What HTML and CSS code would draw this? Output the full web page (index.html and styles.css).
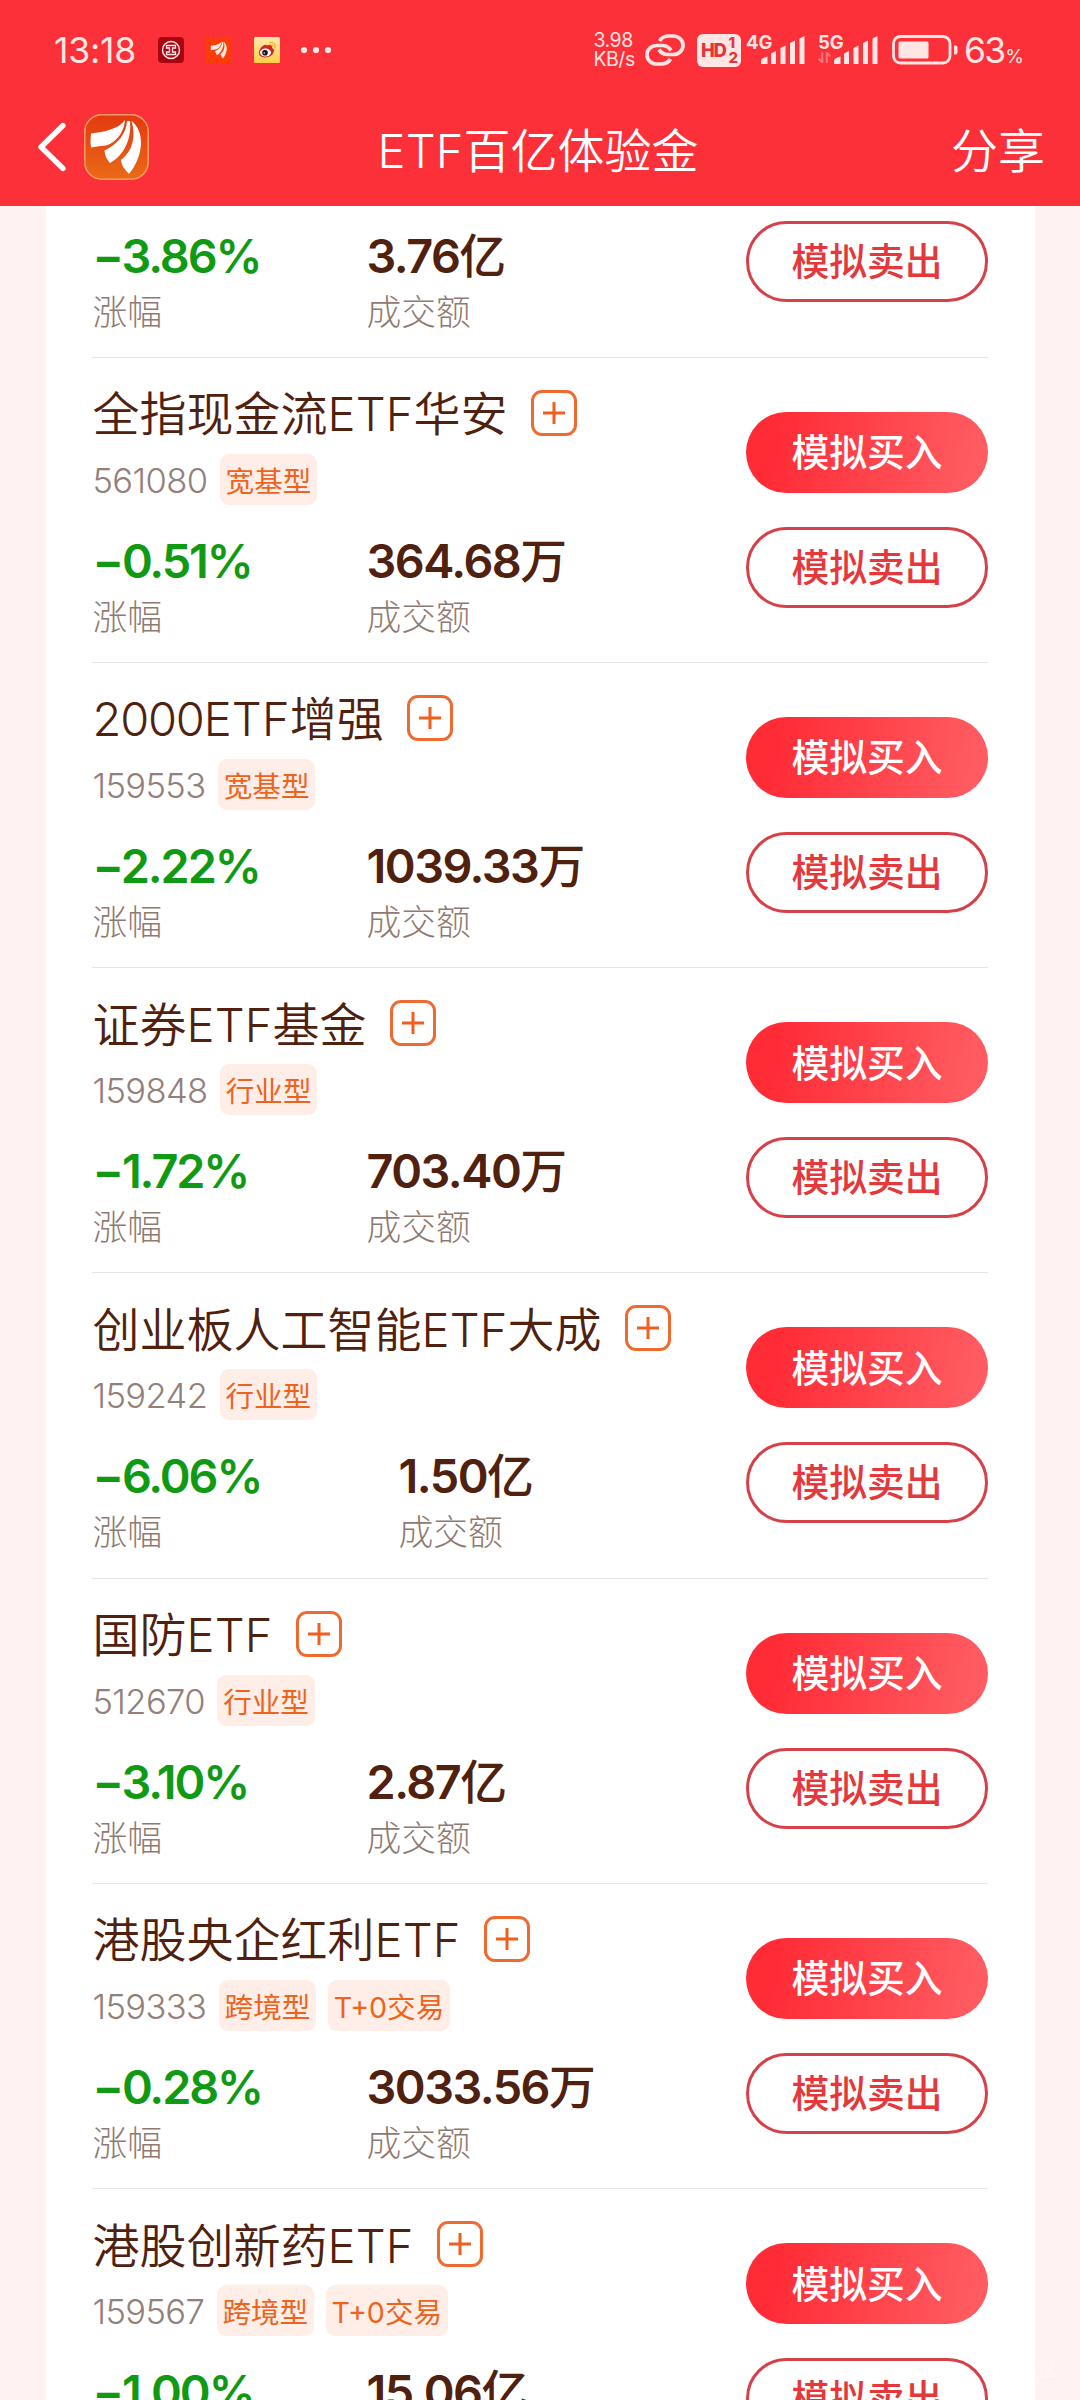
FILE: index.html
```html
<!DOCTYPE html>
<html lang="zh-CN">
<head>
<meta charset="utf-8">
<title>ETF百亿体验金</title>
<link rel="stylesheet" href="styles.css">
</head>
<body>
<svg width="0" height="0" class="defs">
  <symbol id="plus" viewBox="0 0 46 46"><rect x="1.5" y="1.5" width="43" height="43" rx="9.5" fill="none" stroke="#ef6a30" stroke-width="3"/><path d="M12 23H34M23 12V34" stroke="#ef5f1e" stroke-width="3" fill="none"/></symbol>
  <symbol id="petals" viewBox="0 0 65 66"><path d="M41 6C35 15 20 18 7 19.500Q6 27 7 33.500Q15 32 22 31.500C33 28 40 18 41 6Z"/><path d="M43 7C42 20 34 30 20.500 36.500Q21 44 26 49C39 42 48 26 46 7Z"/><path d="M47.500 7C61 17 60 42 45 60Q37 52 37 46C49 37 52 22 47.500 7Z"/></symbol>
  <symbol id="bars" viewBox="0 0 44 28"><path d="M0 28V25Q0 22 6.500 20.500V28ZM10 28V17.500L15 15V28ZM19.500 28V12L24.500 9.500V28ZM29 28V7L34 4.500V28ZM38.500 28V2.500L43.500 0V28Z"/></symbol>
</svg>
<header class="top">
  <div class="status">
    <span class="time">13:18</span>
    <svg class="app" viewBox="0 0 26 26"><rect width="26" height="26" rx="4" fill="#a90310"/><circle cx="13" cy="13" r="8.500" fill="none" stroke="#ffe9e6" stroke-width="1.500"/><path d="M8.500 8.500H17.500V11H14.500V15H17.500V17.500H8.500V15H11.500V11H8.500Z" fill="none" stroke="#ffe9e6" stroke-width="1.300"/></svg>
    <svg class="app" viewBox="0 0 26 26"><rect width="26" height="26" rx="1" fill="#fd3c0a"/><use href="#petals" x="2.500" y="2.500" width="21" height="21" fill="#ffe9dd"/></svg>
    <svg class="app" viewBox="0 0 26 26"><defs><linearGradient id="wb" x2="0" y2="1"><stop stop-color="#ffe9ad"/><stop offset="1" stop-color="#ffcf45"/></linearGradient></defs><rect width="26" height="26" rx="1.500" fill="url(#wb)"/><path d="M5 16C5 11 11 6 13 8.500Q19 6 18 11Q21 12 19.500 15.500C17 22 5 22 5 16Z" fill="#d0262a"/><ellipse cx="11.500" cy="15.500" rx="5.500" ry="4" fill="#fff"/><circle cx="11" cy="15.800" r="2.800" fill="#1c0f10"/><circle cx="10.300" cy="16" r=".8" fill="#fff"/><path d="M15.500 5.500Q21.500 4.500 21 11M16 8Q19 7.500 18.800 10" fill="none" stroke="#fbb13a" stroke-width="1.300"/></svg>
    <svg class="dots" viewBox="0 0 32 8"><circle cx="4" cy="4" r="3.100"/><circle cx="16" cy="4" r="3.100"/><circle cx="28" cy="4" r="3.100"/></svg>
    <div class="sys">
      <span class="speed"><b>3.98</b><b>KB/s</b></span>
      <svg class="link" viewBox="0 0 40 32"><path d="M14.500 7Q17.500 2 24 2H28A10 9.200 0 0 1 28 20.500H22Q16.500 20 14 15.500M25.500 25Q22.500 30 16 30H12A10 9.200 0 0 1 12 11.500H18Q23.500 12 26 16.500" fill="none" stroke-width="3.700"/></svg>
      <span class="hd">HD<i><b>1</b><b>2</b></i></span>
      <span class="net"><b>4G</b><svg class="sig"><use href="#bars"/></svg></span>
      <span class="net net5"><b>5G</b><svg class="updown" viewBox="0 0 14 12"><path d="M4.500 0V11L.5 7.500M9.500 12V1L13.500 4.500" fill="none" stroke-width="2.200"/></svg><svg class="sig"><use href="#bars"/></svg></span>
      <svg class="batt" viewBox="0 0 66 30"><rect x="1.500" y="1.500" width="56.500" height="26.500" rx="7" fill="none" stroke-width="2.800"/><rect x="6.500" y="6.500" width="30" height="17" rx="1.500" stroke="none"/><path d="M62 10.500H63.500Q65.500 10.500 65.500 12.500V17.500Q65.500 19.500 63.500 19.500H62Z" stroke="none"/></svg>
      <span class="pct">63<small>%</small></span>
    </div>
  </div>
  <nav class="bar">
    <svg class="back" viewBox="0 0 28 50"><path d="M25 3.500L3 25L25 46.500" fill="none" stroke="#fff" stroke-width="5.300" stroke-linecap="round" stroke-linejoin="round"/></svg>
    <svg class="logo" viewBox="0 0 65 66"><defs><linearGradient id="lg" x2="0" y2="1"><stop stop-color="#e23a10"/><stop offset="1" stop-color="#ea6a16"/></linearGradient></defs><rect x=".8" y=".8" width="63.400" height="64.400" rx="17" fill="url(#lg)" stroke="#fb9b68" stroke-width="1.500"/><use href="#petals" width="65" height="66" fill="#fff"/></svg>
    <h1><span class="lat">ETF</span>百亿体验金</h1>
    <a class="share">分享</a>
  </nav>
</header>
<main class="page">
  <section class="list">
    <article class="row partial">
      <div class="info">
        <div class="stats"><div class="stat"><em class="down">−3.86%</em><span>涨幅</span></div><div class="stat"><em>3.76<u>亿</u></em><span>成交额</span></div></div>
      </div>
      <div class="actions"><button class="sell">模拟卖出</button></div>
    </article>
    <article class="row">
      <div class="info">
        <div class="name">全指现金流<span class="lat">ETF</span>华安<svg><use href="#plus"/></svg></div>
        <div class="meta"><span class="code">561080</span><span class="tag">宽基型</span></div>
        <div class="stats"><div class="stat"><em class="down">−0.51%</em><span>涨幅</span></div><div class="stat"><em>364.68<u>万</u></em><span>成交额</span></div></div>
      </div>
      <div class="actions"><button class="buy">模拟买入</button><button class="sell">模拟卖出</button></div>
    </article>
    <article class="row">
      <div class="info">
        <div class="name"><span class="num">2000</span><span class="lat">ETF</span>增强<svg><use href="#plus"/></svg></div>
        <div class="meta"><span class="code">159553</span><span class="tag">宽基型</span></div>
        <div class="stats"><div class="stat"><em class="down">−2.22%</em><span>涨幅</span></div><div class="stat"><em>1039.33<u>万</u></em><span>成交额</span></div></div>
      </div>
      <div class="actions"><button class="buy">模拟买入</button><button class="sell">模拟卖出</button></div>
    </article>
    <article class="row">
      <div class="info">
        <div class="name">证券<span class="lat">ETF</span>基金<svg><use href="#plus"/></svg></div>
        <div class="meta"><span class="code">159848</span><span class="tag">行业型</span></div>
        <div class="stats"><div class="stat"><em class="down">−1.72%</em><span>涨幅</span></div><div class="stat"><em>703.40<u>万</u></em><span>成交额</span></div></div>
      </div>
      <div class="actions"><button class="buy">模拟买入</button><button class="sell">模拟卖出</button></div>
    </article>
    <article class="row wide">
      <div class="info">
        <div class="name">创业板人工智能<span class="lat">ETF</span>大成<svg><use href="#plus"/></svg></div>
        <div class="meta"><span class="code">159242</span><span class="tag">行业型</span></div>
        <div class="stats"><div class="stat"><em class="down">−6.06%</em><span>涨幅</span></div><div class="stat"><em>1.50<u>亿</u></em><span>成交额</span></div></div>
      </div>
      <div class="actions"><button class="buy">模拟买入</button><button class="sell">模拟卖出</button></div>
    </article>
    <article class="row">
      <div class="info">
        <div class="name">国防<span class="lat">ETF</span><svg><use href="#plus"/></svg></div>
        <div class="meta"><span class="code">512670</span><span class="tag">行业型</span></div>
        <div class="stats"><div class="stat"><em class="down">−3.10%</em><span>涨幅</span></div><div class="stat"><em>2.87<u>亿</u></em><span>成交额</span></div></div>
      </div>
      <div class="actions"><button class="buy">模拟买入</button><button class="sell">模拟卖出</button></div>
    </article>
    <article class="row">
      <div class="info">
        <div class="name">港股央企红利<span class="lat">ETF</span><svg><use href="#plus"/></svg></div>
        <div class="meta"><span class="code">159333</span><span class="tag">跨境型</span><span class="tag">T+0交易</span></div>
        <div class="stats"><div class="stat"><em class="down">−0.28%</em><span>涨幅</span></div><div class="stat"><em>3033.56<u>万</u></em><span>成交额</span></div></div>
      </div>
      <div class="actions"><button class="buy">模拟买入</button><button class="sell">模拟卖出</button></div>
    </article>
    <article class="row">
      <div class="info">
        <div class="name">港股创新药<span class="lat">ETF</span><svg><use href="#plus"/></svg></div>
        <div class="meta"><span class="code">159567</span><span class="tag">跨境型</span><span class="tag">T+0交易</span></div>
        <div class="stats"><div class="stat"><em class="down">−1.00%</em><span>涨幅</span></div><div class="stat"><em>15.06<u>亿</u></em><span>成交额</span></div></div>
      </div>
      <div class="actions"><button class="buy">模拟买入</button><button class="sell">模拟卖出</button></div>
    </article>
  </section>
</main>
<span class="mark">社区</span>
</body>
</html>
```
FILE: styles.css
```css
* { box-sizing: border-box; margin: 0; padding: 0; }
html, body { width: 1080px; height: 2400px; overflow: hidden; }
body {
  display: flex;
  flex-direction: column;
  position: relative;
  background: #fff2f2;
  font-family: Inter, "Noto Sans CJK SC", sans-serif;
  color: #4f210e;
}
em, i, u { font-style: normal; text-decoration: none; }
b { font-weight: inherit; }
.defs { display: none; }

/* Red header: status bar and navigation */
.top { flex: none; height: 206px; background: #fb3038; color: #fff; overflow: hidden; }
.status {
  display: flex;
  align-items: center;
  height: 100px;
  padding: 0 58px 0 54px;
  color: #ffe5e3;
  fill: #ffe5e3;
  stroke: #ffe5e3;
}
.status svg { flex: none; }
.time { width: 104px; font-size: 35.5px; letter-spacing: -0.2px; }
.app { width: 26px; height: 26px; margin-right: 22px; stroke: none; }
.dots { width: 32px; height: 8px; stroke: none; margin-left: -2px; }
.sys { display: flex; align-items: center; margin-left: auto; height: 34px; }
.speed { display: flex; flex-direction: column; width: 51.5px; font-size: 19.5px; line-height: 19.5px; letter-spacing: -0.5px; }
.link { width: 40px; height: 32px; fill: none; margin-right: 12px; }
.hd {
  display: flex;
  align-items: center;
  width: 44px;
  height: 33px;
  padding-left: 4px;
  border-radius: 6px;
  background: #ffe5e3;
  color: #e2353b;
  font-size: 18.5px;
  font-weight: 800;
  letter-spacing: -1.4px;
}
.hd i { display: flex; flex-direction: column; margin-left: 3px; font-size: 15px; line-height: 15px; letter-spacing: 0; }
.net { position: relative; width: 59px; height: 30px; margin-left: 5px; font-weight: 700; font-size: 18.5px; line-height: 14px; }
.net5 { width: 60px; margin-left: 13px; }
.sig { position: absolute; right: 0; bottom: 1px; width: 44px; height: 28px; stroke: none; }
.updown { position: absolute; left: 0; bottom: 2px; width: 13px; height: 11px; opacity: 0.4; }
.batt { width: 66px; height: 30px; margin-left: 14px; }
.pct { display: flex; align-items: baseline; height: 40px; width: 58px; margin-left: 6px; padding-top: 1px; font-size: 35.5px; line-height: 40px; letter-spacing: -1.8px; }
.pct small { font-size: 19px; line-height: 20px; margin-left: 1px; }

.bar { display: flex; align-items: center; height: 106px; padding: 0 35px 12px 38px; }
.back { width: 28px; height: 50px; }
.logo { width: 65px; height: 66px; margin-left: 18px; }
.bar h1, .share { font-size: 47px; line-height: 60px; font-weight: 350; white-space: nowrap; padding-top: 7px; }
.bar h1 { margin-left: 228.5px; }
.share { margin-left: auto; }

/* Scrolled product list */
.page { flex: none; height: 2194px; overflow: hidden; padding: 0 45.5px 0 46px; }
.list { padding: 0 46.5px 0 46px; background: #fff; }
.row {
  display: flex;
  justify-content: space-between;
  height: 305.3px;
  border-top: 1.5px solid #e6e6e6;
}
.info { padding: 32px 0 0 0.5px; }
.name {
  display: flex;
  align-items: center;
  height: 46px;
  font-size: 47px;
  line-height: 46px;
  font-weight: 350;
  white-space: nowrap;
  padding-top: 3px;
}
.name svg { width: 46px; height: 46px; margin: -3px 0 0 23px; }
.lat { letter-spacing: 0.2px; }
.num { letter-spacing: -1.2px; }
.meta { display: flex; height: 51px; margin-top: 18px; color: #93807a; }
.code { font-size: 34.5px; line-height: 54px; font-weight: 300; letter-spacing: -0.6px; margin-right: 12.5px; }
.tag {
  height: 51px;
  margin-right: 12px;
  padding: 0 5.7px;
  border-radius: 9px;
  background: #feeee7;
  color: #ee6320;
  font-size: 28.6px;
  line-height: 55px;
  white-space: nowrap;
}
.stats { display: flex; margin-top: 30px; }
.stat { width: 274px; }
.wide .stat { width: 306px; }
.stat em { display: block; font-size: 46.8px; line-height: 53px; font-weight: 600; letter-spacing: -1.5px; white-space: nowrap; }
.stat u { font-weight: 500; letter-spacing: 0; }
.stat .down { color: #109a14; letter-spacing: -2.1px; }
.stat span { display: block; margin-top: 9px; font-size: 34.8px; line-height: 41px; font-weight: 300; color: #8f7a72; }

.actions { display: flex; flex-direction: column; gap: 34px; padding-top: 54px; flex: none; }
.actions button {
  width: 242px;
  height: 81px;
  border: 0;
  border-radius: 41px;
  font: 500 37.8px/80px Inter, "Noto Sans CJK SC", sans-serif;
}
.actions .buy { color: #fff; background: linear-gradient(100deg, #ff2b35 12%, #ff5b61 92%); }
.actions .sell { color: #e4383d; background: #fff; border: 3px solid #d64049; line-height: 75px; }

/* First row is scrolled partly under the header */
.partial { height: 150.5px; border-top: 0; }
.partial .info { padding-top: 24px; }
.partial .stats { margin-top: 0; }
.partial .actions { padding-top: 15px; }

.mark { position: absolute; right: 23px; bottom: 20px; font-size: 18px; line-height: 20px; color: rgba(255, 255, 255, 0.45); }
```
